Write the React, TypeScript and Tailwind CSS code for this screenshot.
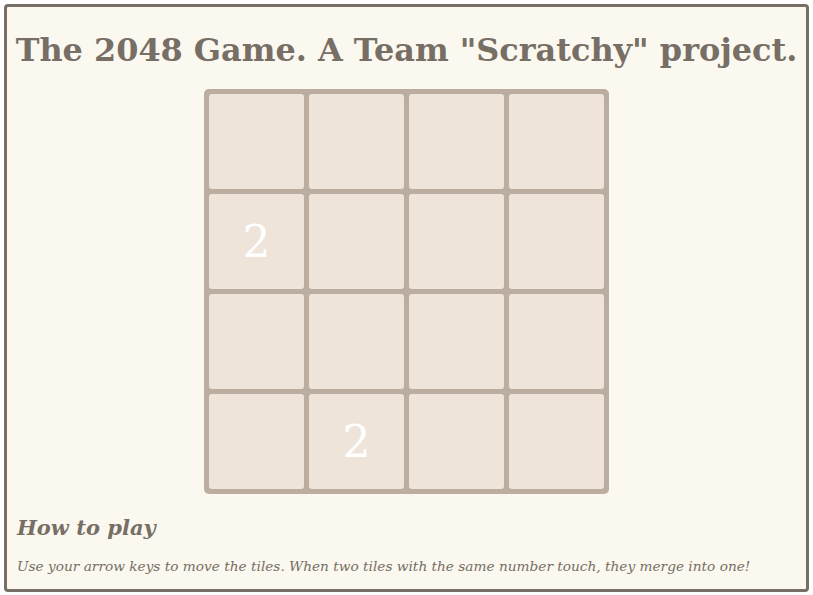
export default function App() {
  const tiles: (number | null)[] = [
    null, null, null, null,
    2, null, null, null,
    null, null, null, null,
    null, 2, null, null,
  ];
  return (
    <div className="w-[813px] h-[595px] bg-white p-[4px]" style={{ fontFamily: '"DejaVu Serif", serif' }}>
      <div className="w-[805px] h-[588px] border-[3px] border-[#776e65] rounded-[4px] bg-[#faf8ef] text-[#776e65] flex flex-col items-center">
        <h1 className="text-[31.9px] font-bold mt-[23px] leading-[40px] whitespace-nowrap">The 2048 Game. A Team "Scratchy" project.</h1>
        <div className="mt-[19px] w-[405px] h-[405px] bg-[#bbada0] rounded-[5px] p-[5px] grid grid-cols-[repeat(4,95px)] grid-rows-[repeat(4,95px)] gap-[5px]">
          {tiles.map((t, i) => (
            <div key={i} className="bg-[#eee4da] rounded-[3px] flex items-center justify-center text-white text-[44px] leading-none">
              {t ?? ""}
            </div>
          ))}
        </div>
        <div className="self-stretch px-[10px]">
          <h2 className="text-[21px] font-bold italic mt-[20px] leading-[28px]">How to play</h2>
          <p className="text-[13.7px] italic mt-[14px] leading-[20px]">Use your arrow keys to move the tiles. When two tiles with the same number touch, they merge into one!</p>
        </div>
      </div>
    </div>
  );
}
